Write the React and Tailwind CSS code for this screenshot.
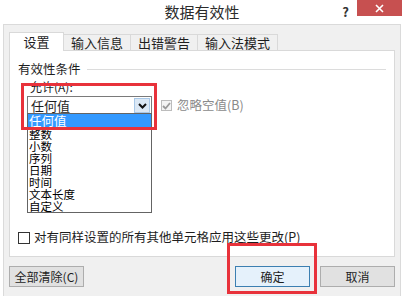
const FONT = "font-['Microsoft_YaHei','Noto_Sans_CJK_SC',sans-serif]"

const tabs = ['设置', '输入信息', '出错警告', '输入法模式']
const items = ['整数', '小数', '序列', '日期', '时间', '文本长度', '自定义']

function Tab({ label, active }) {
  if (active) {
    return (
      <div className="relative z-10 -mb-px flex h-[19px] w-[55px] items-center justify-center border border-b-0 border-[#d9d9d9] bg-white text-[13px] text-[#1e1e1e]">
        {label}
      </div>
    )
  }
  return (
    <div className="mt-[2px] flex h-[16px] items-center border border-b-0 border-l-0 border-[#d9d9d9] bg-[#f0f0f0] px-[7px] text-[13px] text-[#1e1e1e]">
      {label}
    </div>
  )
}

function Button({ label, primary, className }) {
  return (
    <div
      className={
        'flex h-[21px] w-[75px] items-center justify-center border text-[12px] text-[#1e1e1e] ' +
        (primary ? 'border-[#3c7fb1] bg-[#e5f1fb]' : 'border-[#adadad] bg-[#e1e1e1]') +
        ' ' +
        (className || '')
      }
    >
      {label}
    </div>
  )
}

export default function App() {
  return (
    <div className={'relative h-[296px] w-[404px] overflow-hidden bg-white ' + FONT}>
      {/* title bar */}
      <div className="relative flex h-[24px] items-center justify-center">
        <span className="text-[15px] text-[#2b2b2b]">数据有效性</span>
        <div className="absolute right-[2px] top-0 flex items-start">
          <span className="mr-[8px] mt-[2px] text-[13px] font-bold text-[#333]">?</span>
          <div className="flex h-[16px] w-[45px] items-center justify-center bg-[#c75050]">
            <svg width="9" height="9" viewBox="0 0 9 9">
              <path d="M1 1L8 8M8 1L1 8" stroke="#fff" strokeWidth="1.6" />
            </svg>
          </div>
        </div>
      </div>

      {/* client area */}
      <div className="mx-[3px] flex h-[272px] flex-col border-l border-r border-t border-[#dadada] bg-[#f0f0f0] pt-[7px]">
        <div className="flex pl-[5px]">
          {tabs.map((t, i) => (
            <Tab key={t} label={t} active={i === 0} />
          ))}
        </div>

        <div className="mx-[5px] flex h-[207px] flex-col border border-[#d9d9d9] bg-white pl-[8px] pr-[8px] text-[12px] text-[#1e1e1e]">
          <div className="mt-[11px] flex items-center">
            <span className="text-[12.5px] leading-[14px]">有效性条件</span>
            <div className="ml-[6px] h-px flex-1 bg-[#dcdcdc]" />
          </div>
          <div className="ml-[12px] mt-[5px] text-[12px] leading-[12px]">允许(A):</div>

          <div className="ml-[9px] mt-[3px] flex items-center">
            <div className="flex h-[19px] w-[125px] items-center border border-[#7a7a7a] bg-white pl-[3px] pr-px">
              <span className="flex-1 text-[13px] leading-[14px]">任何值</span>
              <div className="flex h-[15px] w-[16px] items-center justify-center border border-[#a8c8e8] bg-[#dbe8f5]">
                <svg width="9" height="6" viewBox="0 0 9 6">
                  <path d="M1 1L4.5 4.5L8 1" stroke="#111" strokeWidth="2" fill="none" />
                </svg>
              </div>
            </div>
            <div className="ml-[9px] flex items-center">
              <div className="flex h-[11px] w-[11px] items-center justify-center border border-[#bcbcbc] bg-[#f4f4f4]">
                <svg width="9" height="8" viewBox="0 0 9 8">
                  <path d="M1 4L3.5 6.5L8 1" stroke="#9a9a9a" strokeWidth="1.8" fill="none" />
                </svg>
              </div>
              <span className="ml-[5px] text-[12.5px] text-[#8a8a8a]">忽略空值(B)</span>
            </div>
          </div>

          <div className="mt-auto mb-[9px] flex items-center">
            <div className="h-[12px] w-[12px] border border-[#333] bg-white" />
            <span className="ml-[4px] text-[12.5px]">对有同样设置的所有其他单元格应用这些更改(P)</span>
          </div>
        </div>

        <div className="mx-[5px] mt-[9px] flex">
          <Button label="全部清除(C)" className="w-[74px]" />
          <div className="flex-1" />
          <Button label="确定" primary />
          <Button label="取消" className="ml-[10px]" />
        </div>
      </div>

      {/* open dropdown list */}
      <div className="absolute left-[27px] top-[113px] h-[100px] w-[125px] border border-[#646464] bg-white text-[11.5px] text-black">
        <div className="h-[14px] bg-[#3399ff] pl-[1px] text-[12.5px] leading-[14px] text-white">任何值</div>
        {items.map(it => (
          <div key={it} className="h-[12px] pl-[1px] leading-[12px]">
            {it}
          </div>
        ))}
      </div>

      {/* annotation boxes */}
      <div className="pointer-events-none absolute left-[21px] top-[83px] h-[47px] w-[136px] border-[3px] border-[#e8323b]" />
      <div className="pointer-events-none absolute left-[227px] top-[243px] h-[51px] w-[90px] border-[3px] border-[#e8323b]" />
    </div>
  )
}
